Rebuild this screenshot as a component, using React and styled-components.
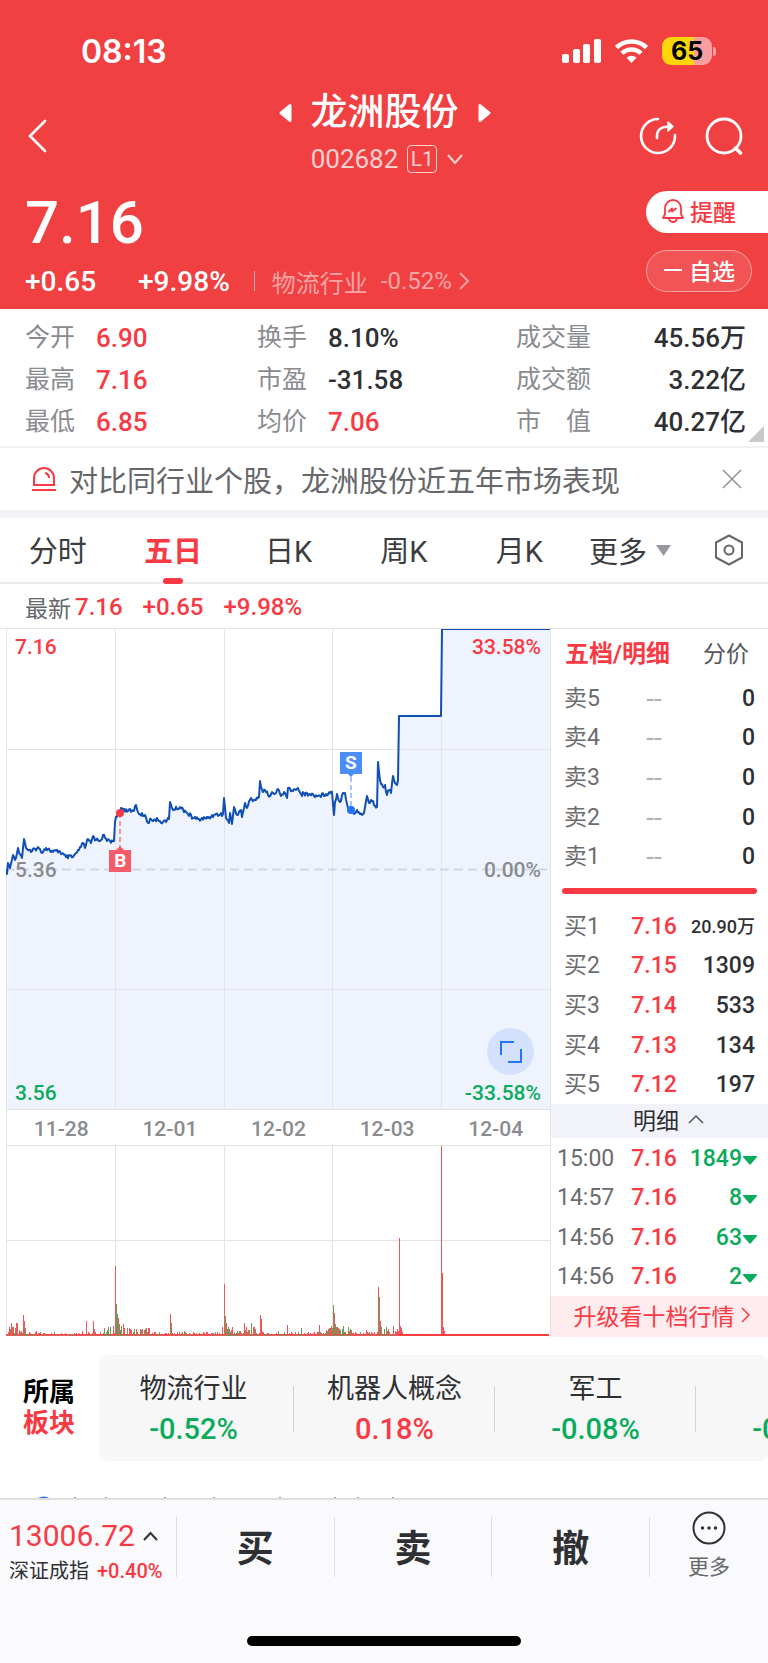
import React from 'react';
import styled, {createGlobalStyle} from 'styled-components';

const RED = '#f93943';
const GREEN = '#0aab5c';
const INK = '#2f3033';
const GREY = '#8a8b8f';
const LINE = '#e4e4e6';

const GlobalStyle = createGlobalStyle`
  * {
    box-sizing: border-box;
  }

  body {
    margin: 0;
    background: #fff;
    color: ${INK};
    font-family: Roboto, "Noto Sans CJK SC", sans-serif;
    font-size: 24px;
  }

  button {
    padding: 0;
    border: 0;
    background: none;
    color: inherit;
    font: inherit;
    cursor: pointer;
  }

  a {
    color: inherit;
    text-decoration: none;
  }

  svg {
    display: block;
    flex: none;
  }
`
const Page = styled.div`
  display: flex;
  flex-direction: column;
  min-height: 100vh;
  overflow-x: hidden;
`

/* ---------- header ---------- */
const Header = styled.header`
  background: #f04042;
  color: #fff;
`
const StatusBar = styled.div`
  display: flex;
  justify-content: space-between;
  align-items: center;
  height: 90px;
  padding: 12px 52px 0 81px;
`
const Clock = styled.div`
  font-family: Inter, sans-serif;
  font-size: 32px;
  font-weight: 600;
`
const StatusIcons = styled.div`
  display: flex;
  align-items: center;
  gap: 14px;
`
const Battery = styled.div`
  display: flex;
  align-items: center;
  gap: 1px;

  &::after {
    content: '';
    width: 3px;
    height: 9px;
    border-radius: 0 3px 3px 0;
    background: rgba(255, 255, 255, 0.5);
  }
`
const BatteryLevel = styled.div`
  width: 50px;
  line-height: 28px;
  border-radius: 9px;
  background: linear-gradient(90deg, #ffd60a 65%, #f99fa1 65%);
  color: #000;
  font-family: Inter, sans-serif;
  font-size: 25px;
  font-weight: 700;
  text-align: center;
`
const NavBar = styled.nav`
  display: grid;
  grid-template-columns: 1fr auto 1fr;
  align-items: center;
  padding: 0 25px 0 26px;
`
const BackButton = styled.button`
  justify-self: start;
`
const TitleBlock = styled.div`
  display: flex;
  flex-direction: column;
  align-items: center;
`
const TitleRow = styled.div`
  display: flex;
  align-items: center;
  gap: 19px;
  height: 46px;
`
const StockName = styled.h1`
  margin: 0;
  font-size: 37px;
  font-weight: 500;
  line-height: 46px;
`
const CodeRow = styled.div`
  display: flex;
  align-items: center;
  gap: 9px;
  height: 46px;
  padding-left: 6px;
  color: #fbd0d1;
  font-size: 26px;
`
const LevelTag = styled.span`
  width: 30px;
  border: 1px solid #fbd0d1;
  border-radius: 4px;
  font-size: 21px;
  line-height: 26px;
  text-align: center;
`
const NavActions = styled.div`
  display: flex;
  justify-self: end;
  gap: 28px;
`
const PriceRow = styled.div`
  display: flex;
  justify-content: space-between;
  height: 127px;
  padding-left: 25px;
`
const Price = styled.div`
  font-size: 60px;
  font-weight: 500;
  line-height: 82px;
`
const ChangeRow = styled.div`
  display: flex;
  align-items: center;
  height: 34px;
  font-size: 28px;
  font-weight: 500;
`
const Percent = styled.span`
  margin-left: 42px;
`
const IndustryLink = styled.a`
  display: flex;
  align-items: center;
  gap: 13px;
  margin-left: 24px;
  color: #f8a3a4;
  font-size: 24px;
  font-weight: 400;

  &::before {
    content: '';
    width: 1px;
    height: 20px;
    margin-right: 4px;
    background: #f8a3a4;
  }

  svg {
    margin-left: -6px;
  }
`
const PillColumn = styled.div`
  display: flex;
  flex-direction: column;
  gap: 17px;
  padding-top: 9px;
`
const Pill = styled.button`
  display: flex;
  align-items: center;
  gap: 6px;
  width: ${({$filled}) => $filled ? '122px' : '106px'};
  height: 42px;
  padding: 0 0 3px 16px;
  border: ${({$filled}) => $filled ? '0' : '1px solid #f8a3a4'};
  border-radius: ${({$filled}) => $filled ? '21px 0 0 21px' : '21px'};
  background: ${({$filled}) => $filled ? '#fff' : '#f25355'};
  color: ${({$filled}) => $filled ? RED : '#fff'};
  font-size: 23px;
  font-weight: 500;
`

/* ---------- key figures ---------- */
const Figures = styled.dl`
  position: relative;
  display: grid;
  grid-template-columns: 71px 161px 71px 188px 97px 1fr;
  margin: 0;
  padding: 8px 22px 3px 25px;
  border-bottom: 2px solid #f1f1f3;
  line-height: 42px;
`
const FigureLabel = styled.dt`
  color: ${GREY};
  font-size: 25px;
  white-space: pre;
`
const FigureValue = styled.dd`
  margin: 0;
  color: ${({$up}) => $up ? RED : INK};
  font-size: 26px;
  font-weight: 500;
  text-align: ${({$right}) => $right ? 'right' : 'left'};
`
const Corner = styled.svg`
  position: absolute;
  right: 4px;
  bottom: 4px;
`
const Notice = styled.div`
  display: flex;
  align-items: center;
  gap: 12px;
  height: 70px;
  padding: 0 26px 0 31px;
  border-bottom: 8px solid #f2f4fa;
`
const NoticeText = styled.p`
  flex: 1;
  margin: 0;
  color: #66676b;
  font-size: 29px;
  white-space: nowrap;
`

/* ---------- period tabs ---------- */
const Tabs = styled.div`
  display: flex;
  align-items: center;
  height: 66px;
  padding-right: 24px;
  border-bottom: 2px solid #ebebed;
`
const Tab = styled.button`
  display: flex;
  flex: 1;
  flex-direction: column;
  align-items: center;
  justify-content: center;
  height: 64px;
  padding-top: 4px;
  color: ${({$active}) => $active ? RED : '#3c3d40'};
  font-size: 29px;
  font-weight: ${({$active}) => $active ? 700 : 400};
  line-height: 52px;

  &::after {
    content: '';
    width: 20px;
    height: 6px;
    margin-bottom: -6px;
    border-radius: 3px;
    background: ${({$active}) => $active ? RED : 'transparent'};
  }
`
const MoreTab = styled.button`
  display: flex;
  align-items: center;
  gap: 9px;
  margin: 0 43px 0 12px;
  color: #3c3d40;
  font-size: 29px;
`
const Latest = styled.div`
  display: flex;
  align-items: center;
  gap: 20px;
  height: 44px;
  padding: 2px 0 0 25px;
  color: ${RED};
  font-weight: 500;
`
const LatestLabel = styled.span`
  margin-right: -16px;
  color: #66676b;
  font-size: 23px;
  font-weight: 400;
`

/* ---------- charts ---------- */
const Market = styled.main`
  display: flex;
  border-top: 1px solid ${LINE};
`
const Charts = styled.section`
  flex: 1;
  min-width: 0;
  padding-left: 6px;
`
const Plot = styled.div`
  position: relative;
  height: ${({$height}) => $height}px;

  > svg {
    width: 100%;
    height: 100%;
  }
`
const AxisLabel = styled.span`
  position: absolute;
  ${({$side}) => $side}: 9px;
  ${({$edge}) => ({top: 'top: 5px', middle: 'top: calc(50% - 12px)', bottom: 'bottom: 3px'})[$edge]};
  color: ${({$color}) => $color};
  font-size: 21px;
  font-weight: 500;
  line-height: 26px;
`
const Marker = styled.span`
  position: absolute;
  left: calc(${({$x}) => $x}% - 11px);
  top: ${({$y}) => $y}px;
  width: 22px;
  background: ${({$color}) => $color};
  color: #fff;
  font-size: 19px;
  font-weight: 700;
  line-height: 22px;
  text-align: center;
`
const ExpandButton = styled.button`
  position: absolute;
  right: 16px;
  bottom: 34px;
  display: flex;
  align-items: center;
  justify-content: center;
  width: 47px;
  height: 47px;
  border-radius: 50%;
  background: #d3e1fd;
`
const Dates = styled.div`
  display: flex;
  height: 37px;
  border: solid ${LINE};
  border-width: 1px 0 1px 1px;
  color: ${GREY};
  font-size: 21px;
  font-weight: 500;
  line-height: 38px;
`
const DateLabel = styled.span`
  flex: 1;
  text-align: center;
`

/* ---------- order book ---------- */
const Book = styled.aside`
  flex: 0 0 218px;
  border-left: 1px solid ${LINE};
`
const BookTabs = styled.div`
  display: flex;
  justify-content: space-between;
  align-items: center;
  height: 49px;
  padding: 0 19px 4px 14px;
`
const BookTab = styled.button`
  color: ${({$active}) => $active ? RED : '#55565a'};
  font-size: ${({$active}) => $active ? '24px' : '23px'};
  font-weight: ${({$active}) => $active ? 700 : 400};
`
const Levels = styled.table`
  width: 100%;
  height: ${({$height}) => $height}px;
  border-collapse: collapse;
  table-layout: fixed;

  td, th {
    padding: 2px 0 0;
    line-height: 28px;
  }
`
const LevelName = styled.th`
  width: 78px;
  color: #6b6c70;
  font-size: 23px;
  font-weight: 400;
  text-align: left;
  text-indent: ${({$time}) => $time ? '6px' : '13px'};
`
const LevelPrice = styled.td`
  width: 50px;
  color: ${({$empty}) => $empty ? '#a9b2bf' : RED};
  font-size: ${({$empty}) => $empty ? '28px' : '23px'};
  font-weight: ${({$empty}) => $empty ? 400 : 500};
  text-align: center;
`
const LevelAmount = styled.td`
  color: ${INK};
  font-size: ${({$small}) => $small ? '18px' : '23px'};
  font-weight: 500;
  text-align: right;

  && {
    padding-right: 13px;
  }
`
const TradeAmount = styled(LevelAmount)`
  color: ${GREEN};

  && {
    padding-right: 11px;
  }

  svg {
    display: inline-block;
    margin-left: 1px;
    vertical-align: 1px;
  }
`
const Ratio = styled.div`
  height: 6px;
  margin: 12px 11px;
  border-radius: 3px;
  background: ${RED};
`
const DetailBar = styled.button`
  display: flex;
  align-items: center;
  justify-content: center;
  gap: 9px;
  width: 100%;
  height: 34px;
  padding: 0 0 4px 18px;
  background: #f2f3fa;
  font-size: 23px;
`
const UpgradeLink = styled.a`
  display: flex;
  align-items: center;
  justify-content: center;
  gap: 6px;
  height: 41px;
  padding: 0 0 3px 4px;
  background: #ffecee;
  color: ${RED};
  font-size: 23px;
`

/* ---------- sectors ---------- */
const Sectors = styled.section`
  display: flex;
  align-items: center;
  padding: 18px 0 35px 23px;
`
const SectorsTitle = styled.h2`
  display: flex;
  flex-direction: column;
  width: 76px;
  margin: 0;
  color: #000;
  font-size: 26px;
  font-weight: 700;
  line-height: 31px;

  em {
    color: ${RED};
    font-style: normal;
  }
`
const SectorList = styled.div`
  display: flex;
  flex: 1;
  min-width: 0;
  height: 106px;
  overflow: hidden;
  border-radius: 8px;
  background: #f7f7f7;
`
const Sector = styled.a`
  display: flex;
  flex: 0 0 201px;
  flex-direction: column;
  align-items: center;
  justify-content: center;
  position: relative;
  padding-top: 2px;
  font-size: 27px;
  line-height: 40px;

  &:first-child {
    flex-basis: 195px;
    padding-right: 6px;
  }

  &::after {
    content: '';
    position: absolute;
    right: 0;
    width: 1px;
    height: 46px;
    background: #d3d3d5;
  }
`
const SectorChange = styled.span`
  min-height: 40px;
  color: ${({$up}) => $up ? RED : GREEN};
  font-size: 29px;
  font-weight: 500;
`
const SectorName = styled.span`
  min-height: 40px;
`

/* ---------- bottom bar ---------- */
const BottomBar = styled.footer`
  display: flex;
  flex: 1;
  flex-direction: column;
  justify-content: space-between;
  align-items: center;
  border-top: 2px solid #dedee0;
  background: #fafafd;
`
const Actions = styled.div`
  display: flex;
  align-items: center;
  width: 100%;
  height: 94px;
`
const IndexButton = styled.button`
  flex: 0 0 176px;
  padding: 12px 0 0 9px;
  text-align: left;
`
const IndexValue = styled.span`
  display: flex;
  align-items: center;
  gap: 8px;
  color: ${RED};
  font-size: 30px;
  line-height: 36px;
`
const IndexName = styled.span`
  display: flex;
  gap: 8px;
  font-size: 20px;
  line-height: 34px;
  white-space: nowrap;

  em {
    color: ${RED};
    font-style: normal;
    font-weight: 500;
  }
`
const TradeButton = styled.button`
  flex: 1;
  height: 60px;
  padding-top: 6px;
  border-left: 1px solid #dddde0;
  font-size: 37px;
  font-weight: 700;
  line-height: 54px;
`
const MoreButton = styled.button`
  display: flex;
  flex: 0 0 119px;
  flex-direction: column;
  align-items: center;
  height: 60px;
  border-left: 1px solid #dddde0;
  color: #66676b;
  font-size: 21px;
  line-height: 36px;

  svg {
    margin-top: -6px;
    margin-bottom: 4px;
  }
`
const HomeIndicator = styled.div`
  width: 274px;
  height: 10px;
  margin-bottom: 17px;
  border-radius: 5px;
  background: #000;
`

const figures = [
    ['今开', '6.90', true], ['换手', '8.10%', false], ['成交量', '45.56万', false],
    ['最高', '7.16', true], ['市盈', '-31.58', false], ['成交额', '3.22亿', false],
    ['最低', '6.85', true], ['均价', '7.06', true], ['市\u3000值', '40.27亿', false],
];
const asks = ['卖5', '卖4', '卖3', '卖2', '卖1'];
const bids = [
    ['买1', '7.16', '20.90万'],
    ['买2', '7.15', '1309'],
    ['买3', '7.14', '533'],
    ['买4', '7.13', '134'],
    ['买5', '7.12', '197'],
];
const trades = [
    ['15:00', '7.16', '1849'],
    ['14:57', '7.16', '8'],
    ['14:56', '7.16', '63'],
    ['14:56', '7.16', '2'],
];
const dates = ['11-28', '12-01', '12-02', '12-03', '12-04'];
const sectors = [
    ['物流行业', '-0.52%', false],
    ['机器人概念', '0.18%', true],
    ['军工', '-0.08%', false],
    ['', '-0.52%', false],
];

// main turning points of the five day price line, [x, y] in chart units
const turns = [
    [0, 240], [1, 245], [2, 234], [4, 239], [7, 226], [9, 231], [12, 219], [16, 229], [18, 210], [20, 219],
    [25, 223], [32, 218], [35, 223], [40, 219], [47, 223], [53, 222], [60, 228], [67, 228], [73, 221], [77, 214],
    [79, 219], [81, 211], [85, 214], [87, 207], [90, 211], [95, 211], [97, 206], [101, 212], [108, 212], [109, 193],
    [110, 188], [114, 184], [115, 179], [122, 182], [127, 182], [130, 176], [133, 185], [139, 186], [142, 194],
    [145, 190], [152, 191], [157, 193], [163, 190], [164, 173], [167, 181], [174, 178], [180, 183], [187, 189],
    [193, 190], [202, 189], [208, 186], [217, 185], [218, 169], [220, 189], [223, 194], [224, 184], [226, 195],
    [228, 178], [231, 186], [235, 181], [236, 188], [239, 174], [241, 179], [245, 169], [248, 171], [253, 168],
    [254, 152], [257, 163], [259, 161], [262, 166], [270, 164], [272, 160], [275, 167], [278, 163], [281, 169],
    [282, 159], [287, 162], [292, 159], [295, 165], [303, 165], [312, 167], [320, 165], [326, 163], [328, 186],
    [329, 173], [331, 165], [334, 173], [337, 164], [339, 164], [342, 179], [345, 181], [348, 185], [351, 181],
    [354, 185], [358, 184], [361, 167], [363, 174], [365, 171], [371, 178], [372, 133], [374, 151], [377, 158],
    [379, 156], [381, 166], [383, 161], [385, 164], [387, 147], [389, 154], [391, 156], [392, 151], [393, 87],
    [435, 87], [436, 0], [544, 0],
];

const wobble = (n) => {
    const s = Math.sin(n * 12.9898) * 43758.5453;
    return s - Math.floor(s);
};

function buildLine() {
    const out = [];
    turns.forEach(([x, y], i) => {
        out.push(`${x},${y}`);
        const next = turns[i + 1];
        if (!next || x >= 392) return;
        for (let px = x + 1; px < next[0]; px++) {
            const t = (px - x) / (next[0] - x);
            const py = y + (next[1] - y) * t + (wobble(px) - 0.5) * 4;
            out.push(`${px},${py.toFixed(1)}`);
        }
    });
    return out.join(' ');
}

// [x, height, up]
const spikes = [
    [5, 13, 1], [7, 9, 1], [10, 13, 1], [11, 13, 1], [17, 21, 1], [18, 15, 1], [19, 8, 0], [30, 5, 1], [76, 5, 1],
    [80, 15, 1], [87, 15, 1], [88, 7, 1], [98, 6, 0], [102, 8, 0], [104, 9, 0], [107, 10, 1], [110, 32, 0],
    [109, 70, 1], [111, 22, 0], [112, 18, 1], [113, 12, 0], [115, 10, 0], [117, 12, 1], [118, 8, 1], [123, 8, 1],
    [134, 7, 0], [142, 8, 1], [164, 22, 1], [165, 13, 0], [178, 5, 0], [216, 9, 1], [218, 52, 1], [219, 20, 0],
    [220, 13, 1], [222, 9, 0], [226, 9, 1], [238, 13, 1], [242, 6, 1], [245, 13, 0], [254, 21, 1], [255, 17, 1],
    [272, 5, 0], [281, 11, 1], [295, 8, 0], [313, 11, 1], [324, 8, 1], [325, 10, 1], [327, 31, 0], [328, 23, 1],
    [329, 12, 0], [331, 9, 1], [337, 10, 0], [342, 9, 0], [344, 7, 0], [360, 6, 1], [372, 49, 1], [373, 39, 0],
    [374, 15, 1], [375, 9, 0], [387, 10, 1], [392, 5, 1], [393, 98, 1], [394, 10, 1], [395, 8, 1], [396, 4, 1],
    [435, 190, 1], [436, 63, 1], [437, 9, 1], [438, 5, 1],
];
// stretches where the turnover is dense
const busy = [[0, 20], [95, 130], [134, 144], [218, 250], [320, 347], [372, 392]];

function buildVolume() {
    const bars = [];
    for (let x = 0; x < 392; x++) {
        const dense = busy.some(([a, b]) => x >= a && x <= b);
        const h = 2 + Math.floor(wobble(x + 7) ** 2 * (dense ? 8 : 3));
        bars.push([x, h, wobble(x * 3) > (dense ? 0.5 : 0.25)]);
    }
    return bars.concat(spikes);
}

const linePoints = buildLine();
const volumeBars = buildVolume();
const columns = [0, 109, 218, 326, 435];

function Grid({height, rows}) {
    return (
        <g stroke={LINE} strokeWidth="1">
            {columns.map((x) => <line key={x} x1={x + 0.5} x2={x + 0.5} y1="0" y2={height}/>)}
            {rows.map((y) => <line key={y} x1="0" x2="544" y1={y + 0.5} y2={y + 0.5}/>)}
        </g>
    );
}

function PriceChart() {
    return (
        <Plot $height={480}>
            <svg viewBox="0 0 544 480" preserveAspectRatio="none" role="img" aria-label="五日走势">
                <polygon points={`0,480 ${linePoints} 544,480`} fill="#eff3fe"/>
                <Grid height={480} rows={[120, 360]}/>
                <line x1="0" x2="544" y1="240.5" y2="240.5" stroke="#cfd9e4" strokeWidth="2" strokeDasharray="9 5"/>
                <polyline points={linePoints} fill="none" stroke="#124fb4" strokeWidth="2" strokeLinejoin="round"/>
                <path d="M114 184v34" stroke={RED} strokeWidth="1" strokeDasharray="5 3"/>
                <path d="M345 148v34" stroke="#4b8dfb" strokeWidth="1" strokeDasharray="5 3"/>
                <circle cx="114" cy="184" r="4" fill={RED}/>
                <circle cx="345" cy="181" r="4" fill="#1f74fb"/>
                <path d="M110 221l4-4 4 4z" fill="#f65b6a"/>
                <path d="M341 144l4 4 4-4z" fill="#4b8dfb"/>
            </svg>
            <AxisLabel $side="left" $edge="top" $color={RED}>7.16</AxisLabel>
            <AxisLabel $side="right" $edge="top" $color={RED}>33.58%</AxisLabel>
            <AxisLabel $side="left" $edge="middle" $color={GREY}>5.36</AxisLabel>
            <AxisLabel $side="right" $edge="middle" $color={GREY}>0.00%</AxisLabel>
            <AxisLabel $side="left" $edge="bottom" $color={GREEN}>3.56</AxisLabel>
            <AxisLabel $side="right" $edge="bottom" $color={GREEN}>-33.58%</AxisLabel>
            <Marker $x={21} $y={221} $color="#f65b6a">B</Marker>
            <Marker $x={63.4} $y={123} $color="#4b8dfb">S</Marker>
            <ExpandButton aria-label="全屏">
                <svg width="22" height="22" viewBox="0 0 22 22" fill="none" stroke="#2377fb" strokeWidth="2">
                    <path d="M1 14V1h13M21 8v13H8"/>
                </svg>
            </ExpandButton>
        </Plot>
    );
}

function VolumeChart() {
    return (
        <Plot $height={190}>
            <svg viewBox="0 0 544 190" preserveAspectRatio="none" role="img" aria-label="成交量">
                <Grid height={190} rows={[94]}/>
                {volumeBars.map(([x, h, up], i) => (
                    <rect key={i} x={x} y={190 - h} width="1" height={h} fill={up ? '#f5545a' : '#6f9a55'}/>
                ))}
                <rect x="0" y="188" width="392" height="1" fill="#f93943" opacity="0.5"/>
                <rect x="393" y="188" width="150" height="2" fill="#fb3d40"/>
            </svg>
        </Plot>
    );
}

function OrderBook() {
    return (
        <Book>
            <BookTabs>
                <BookTab $active>五档/明细</BookTab>
                <BookTab>分价</BookTab>
            </BookTabs>
            <Levels $height={198}>
                <tbody>
                {asks.map((name) => (
                    <tr key={name}>
                        <LevelName scope="row">{name}</LevelName>
                        <LevelPrice $empty>--</LevelPrice>
                        <LevelAmount>0</LevelAmount>
                    </tr>
                ))}
                </tbody>
            </Levels>
            <Ratio/>
            <Levels $height={198}>
                <tbody>
                {bids.map(([name, price, amount]) => (
                    <tr key={name}>
                        <LevelName scope="row">{name}</LevelName>
                        <LevelPrice>{price}</LevelPrice>
                        <LevelAmount $small={amount.length > 5}>{amount}</LevelAmount>
                    </tr>
                ))}
                </tbody>
            </Levels>
            <DetailBar>
                明细
                <svg width="16" height="10" viewBox="0 0 16 10" fill="none" stroke="#55565a" strokeWidth="1.5">
                    <path d="M1 9l7-7 7 7"/>
                </svg>
            </DetailBar>
            <Levels $height={158}>
                <tbody>
                {trades.map(([time, price, amount], i) => (
                    <tr key={i}>
                        <LevelName scope="row" $time>{time}</LevelName>
                        <LevelPrice>{price}</LevelPrice>
                        <TradeAmount>
                            {amount}
                            <svg width="14" height="9" viewBox="0 0 14 9" fill={GREEN}>
                                <path d="M0 0h14v1L8 8q-1 1-2 0L0 1z"/>
                            </svg>
                        </TradeAmount>
                    </tr>
                ))}
                </tbody>
            </Levels>
            <UpgradeLink href="#level2">
                升级看十档行情
                <svg width="9" height="16" viewBox="0 0 9 16" fill="none" stroke={RED} strokeWidth="1.5">
                    <path d="M1 1l7 7-7 7"/>
                </svg>
            </UpgradeLink>
        </Book>
    );
}

function StockHeader() {
    return (
        <Header>
            <StatusBar>
                <Clock>08:13</Clock>
                <StatusIcons>
                    <svg width="39" height="24" viewBox="0 0 39 24" fill="#fff">
                        <rect x="0" y="15" width="7" height="9" rx="2"/>
                        <rect x="11" y="10" width="7" height="14" rx="2"/>
                        <rect x="21" y="5" width="7" height="19" rx="2"/>
                        <rect x="32" y="0" width="7" height="24" rx="2"/>
                    </svg>
                    <svg width="33" height="24" viewBox="0 0 33 24" fill="none" stroke="#fff" strokeWidth="4.6">
                        <path d="M1.5 8.600a21.500 21.500 0 0 1 30 0"/>
                        <path d="M7 14.400a13.600 13.600 0 0 1 19 0"/>
                        <path d="M16.500 24l-5-5.200a7.200 7.200 0 0 1 10 0z" fill="#fff" stroke="none"/>
                    </svg>
                    <Battery>
                        <BatteryLevel>65</BatteryLevel>
                    </Battery>
                </StatusIcons>
            </StatusBar>
            <NavBar>
                <BackButton aria-label="返回">
                    <svg width="22" height="34" viewBox="0 0 22 34" fill="none" stroke="#fff" strokeWidth="2.6"
                         strokeLinecap="round">
                        <path d="M19 2L4 17l15 15"/>
                    </svg>
                </BackButton>
                <TitleBlock>
                    <TitleRow>
                        <button aria-label="上一只">
                            <svg width="13" height="18" viewBox="0 0 13 18" fill="#fff">
                                <path d="M1 8Q0 9 1 10l9 7.500Q12.500 19 12.500 16V2Q12.500-1 10 .5z"/>
                            </svg>
                        </button>
                        <StockName>龙洲股份</StockName>
                        <button aria-label="下一只">
                            <svg width="13" height="18" viewBox="0 0 13 18" fill="#fff">
                                <path d="M12 8Q13 9 12 10l-9 7.500Q.5 19 .5 16V2Q.5-1 3 .5z"/>
                            </svg>
                        </button>
                    </TitleRow>
                    <CodeRow>
                        002682
                        <LevelTag>L1</LevelTag>
                        <svg width="18" height="12" viewBox="0 0 18 12" fill="none" stroke="#fbd0d1" strokeWidth="2">
                            <path d="M2 2l7 8 7-8"/>
                        </svg>
                    </CodeRow>
                </TitleBlock>
                <NavActions>
                    <button aria-label="分享">
                        <svg width="38" height="38" viewBox="0 0 38 38" fill="none" stroke="#fff" strokeWidth="2.6"
                             strokeLinecap="round" strokeLinejoin="round">
                            <path d="M19 2A17 17 0 1 0 36 18"/>
                            <path d="M18 21C17.500 13 21 9.500 32 9.500"/>
                            <path d="M29 5l5 4.500-5 4.500z" fill="#fff" strokeWidth="1.5"/>
                        </svg>
                    </button>
                    <button aria-label="搜索">
                        <svg width="38" height="38" viewBox="0 0 38 38" fill="none" stroke="#fff" strokeWidth="2.8"
                             strokeLinecap="round">
                            <circle cx="19" cy="19" r="17"/>
                            <path d="M30.500 31l5 5" strokeWidth="3.5"/>
                        </svg>
                    </button>
                </NavActions>
            </NavBar>
            <PriceRow>
                <div>
                    <Price>7.16</Price>
                    <ChangeRow>
                        <span>+0.65</span>
                        <Percent>+9.98%</Percent>
                        <IndustryLink href="#industry">
                            物流行业
                            <span>-0.52%</span>
                            <svg width="11" height="18" viewBox="0 0 11 18" fill="none" stroke="#f8a3a4"
                                 strokeWidth="2">
                                <path d="M1 1l8 8-8 8"/>
                            </svg>
                        </IndustryLink>
                    </ChangeRow>
                </div>
                <PillColumn>
                    <Pill $filled>
                        <svg width="22" height="24" viewBox="0 0 22 24" fill="none" stroke={RED} strokeWidth="1.8"
                             strokeLinecap="round" strokeLinejoin="round">
                            <path d="M3 15V9a8 8 0 0 1 16 0v6l2 4H1zM7 20q1 3 4 3t4-3"/>
                            <path d="M7 12.500l3-3v3l4-3"/>
                        </svg>
                        提醒
                    </Pill>
                    <Pill>
                        <svg width="20" height="4" viewBox="0 0 20 4" fill="#fff">
                            <rect x="1" y="1" width="18" height="2"/>
                        </svg>
                        自选
                    </Pill>
                </PillColumn>
            </PriceRow>
        </Header>
    );
}

function App() {
    return (
        <Page>
            <GlobalStyle/>
            <StockHeader/>
            <Figures>
                {figures.map(([label, value, up], i) => (
                    <React.Fragment key={label}>
                        <FigureLabel>{label}</FigureLabel>
                        <FigureValue $up={up} $right={i % 3 === 2}>{value}</FigureValue>
                    </React.Fragment>
                ))}
                <Corner width="16" height="16" viewBox="0 0 16 16" fill="#c9c9cb">
                    <path d="M16 0v16H0z"/>
                </Corner>
            </Figures>
            <Notice>
                <svg width="26" height="26" viewBox="0 0 26 26" fill="none" stroke={RED} strokeWidth="2">
                    <path d="M3 19V12a10 10 0 0 1 20 0v7zM1 24h24M14 7q4 1 4 5"/>
                </svg>
                <NoticeText>对比同行业个股，龙洲股份近五年市场表现</NoticeText>
                <button aria-label="关闭">
                    <svg width="20" height="20" viewBox="0 0 20 20" stroke="#8f9094" strokeWidth="1.5">
                        <path d="M1 1l18 18M19 1L1 19"/>
                    </svg>
                </button>
            </Notice>
            <Tabs>
                <Tab>分时</Tab>
                <Tab $active>五日</Tab>
                <Tab>日K</Tab>
                <Tab>周K</Tab>
                <Tab>月K</Tab>
                <MoreTab>
                    更多
                    <svg width="15" height="11" viewBox="0 0 15 11" fill="#97989c">
                        <path d="M0 0h15L7.500 11z"/>
                    </svg>
                </MoreTab>
                <button aria-label="设置">
                    <svg width="30" height="32" viewBox="0 0 30 32" fill="none" stroke="#66676b" strokeWidth="2"
                         strokeLinejoin="round">
                        <path d="M15 1.500L28 8.500v15L15 30.500 2 23.500v-15z"/>
                        <circle cx="15" cy="16" r="4.5"/>
                    </svg>
                </button>
            </Tabs>
            <Latest>
                <LatestLabel>最新</LatestLabel>
                <span>7.16</span>
                <span>+0.65</span>
                <span>+9.98%</span>
            </Latest>
            <Market>
                <Charts>
                    <PriceChart/>
                    <Dates>
                        {dates.map((date) => <DateLabel key={date}>{date}</DateLabel>)}
                    </Dates>
                    <VolumeChart/>
                </Charts>
                <OrderBook/>
            </Market>
            <Sectors>
                <SectorsTitle>所属<em>板块</em></SectorsTitle>
                <SectorList>
                    {sectors.map(([name, change, up], i) => (
                        <Sector key={i} href="#sector">
                            <SectorName>{name}</SectorName>
                            <SectorChange $up={up}>{change}</SectorChange>
                        </Sector>
                    ))}
                </SectorList>
            </Sectors>
            {/* top edge of the next card, the bottom bar hides the rest */}
            <svg width="400" height="2" viewBox="0 0 400 2" fill="#9a9b9f">
                <path d="M38 2q6-3 11 0z" fill="#2b62f0"/>
                {[74, 105, 164, 213, 279, 334, 357, 392].map((x) => (
                    <rect key={x} x={x} y="1" width="2" height="1"/>
                ))}
            </svg>
            <BottomBar>
                <Actions>
                    <IndexButton>
                        <IndexValue>
                            13006.72
                            <svg width="15" height="11" viewBox="0 0 15 11" fill="none" stroke={INK} strokeWidth="2">
                                <path d="M1 9l6.500-7L14 9"/>
                            </svg>
                        </IndexValue>
                        <IndexName>深证成指 <em>+0.40%</em></IndexName>
                    </IndexButton>
                    <TradeButton>买</TradeButton>
                    <TradeButton>卖</TradeButton>
                    <TradeButton>撤</TradeButton>
                    <MoreButton>
                        <svg width="34" height="34" viewBox="0 0 34 34" fill="none" stroke={INK} strokeWidth="2">
                            <circle cx="17" cy="17" r="15.5"/>
                            <g fill={INK} stroke="none">
                                <circle cx="10.5" cy="17" r="1.7"/>
                                <circle cx="17" cy="17" r="1.7"/>
                                <circle cx="23.5" cy="17" r="1.7"/>
                            </g>
                        </svg>
                        更多
                    </MoreButton>
                </Actions>
                <HomeIndicator/>
            </BottomBar>
        </Page>
    );
}

export default App;
